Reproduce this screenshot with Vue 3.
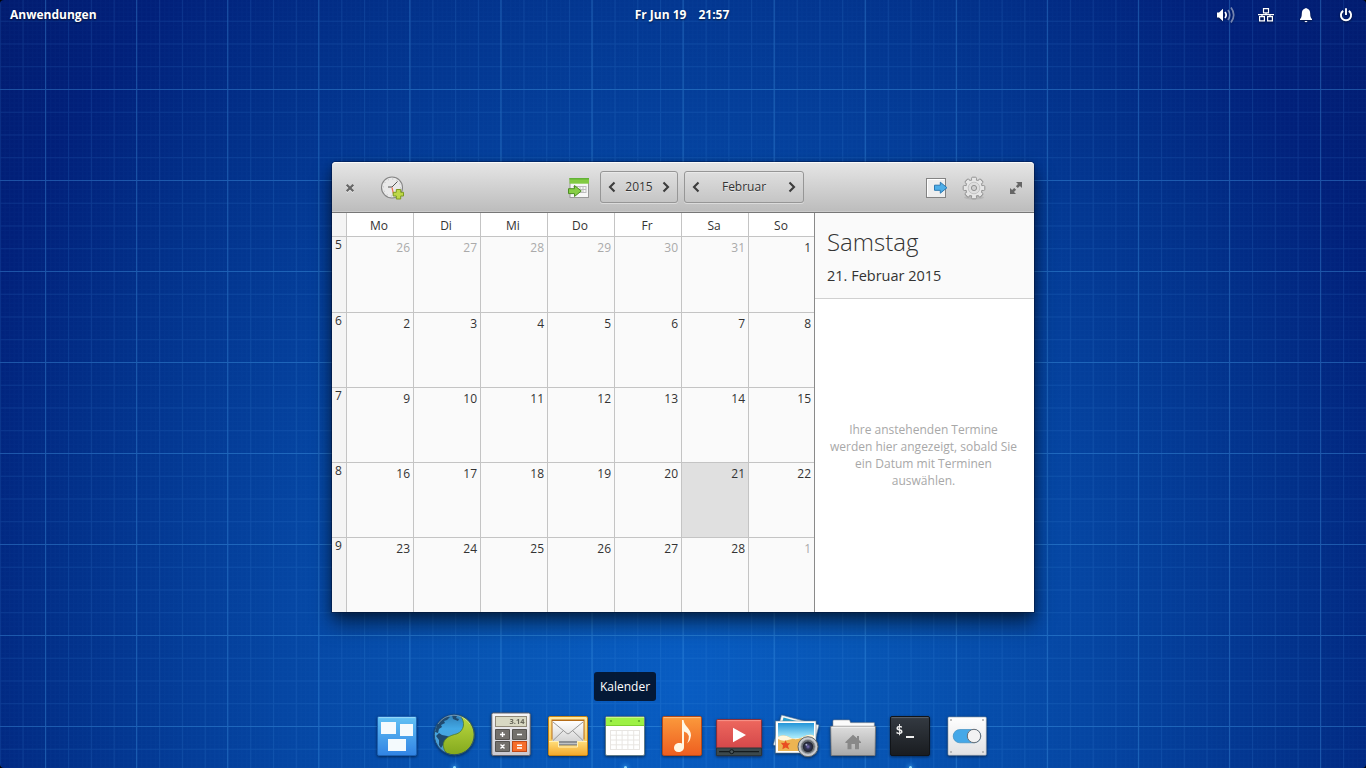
<script setup>
const days = ['Mo', 'Di', 'Mi', 'Do', 'Fr', 'Sa', 'So']
const weeks = [
  { no: 5, days: [26, 27, 28, 29, 30, 31, 1] },
  { no: 6, days: [2, 3, 4, 5, 6, 7, 8] },
  { no: 7, days: [9, 10, 11, 12, 13, 14, 15] },
  { no: 8, days: [16, 17, 18, 19, 20, 21, 22] },
  { no: 9, days: [23, 24, 25, 26, 27, 28, 1] },
]
const isOther = (w, d) => (w === 0 && d < 6) || (w === 4 && d === 6)
const isSelected = (w, d) => w === 3 && d === 5
const teeth = [0, 45, 90, 135, 180, 225, 270, 315]
</script>

<template>
  <div class="desktop">
    <svg class="paper" width="1366" height="768">
      <defs>
        <pattern id="fine" width="4.554" height="4.55" patternUnits="userSpaceOnUse" x="0" y="2.5">
          <path d="M0 .5H4.6M.5 0V4.6" stroke="#3a8af0" stroke-opacity=".035" fill="none" />
        </pattern>
        <pattern id="minor" width="22.768" height="22.75" patternUnits="userSpaceOnUse" x="22.5" y="20.75">
          <path d="M0 .5H22.8M.5 0V22.8" stroke="#4aa0ee" stroke-opacity=".13" fill="none" />
        </pattern>
        <pattern id="major" width="91.07" height="91" patternUnits="userSpaceOnUse" x="45" y="89">
          <path d="M0 .5H91.1M.5 0V91.1" stroke="#4aacf4" stroke-opacity=".25" fill="none" />
        </pattern>
      </defs>
      <rect width="1366" height="768" fill="url(#fine)" />
      <rect width="1366" height="768" fill="url(#minor)" />
      <rect width="1366" height="768" fill="url(#major)" />
      <path d="M0 0H4Q0 0 0 4ZM1366 0H1362Q1366 0 1366 4ZM0 768H4Q0 768 0 764ZM1366 768H1362Q1366 768 1366 764Z" fill="#000" />
    </svg>

    <header class="panel">
      <span class="side">Anwendungen</span>
      <span class="clock"><span>Fr Jun 19</span><span>21:57</span></span>
      <span class="side indicators">
        <svg width="20" height="16" viewBox="0 0 20 16">
          <path d="M1 5.5H3L7 1.7V14.3L3 10.5H1Z" fill="#fff" />
          <path d="M9 5Q11.3 8 9 11" class="wave" />
          <path d="M12 3Q15.5 8 12 13" class="wave dim" />
          <path d="M15 .6Q20.4 8 15 15.5" class="wave dim" />
        </svg>
        <svg width="16" height="16" viewBox="0 0 16 16" fill="none" stroke="#fff" stroke-width="1.2">
          <path d="M5.5 1.6H10.5V5.9H5.5ZM1.6 9.6H6.4V13.9H1.6ZM9.6 9.6H14.4V13.9H9.6ZM0 7.6H16M8 6V7.6M4 7.6V9.5M12 7.6V9.5" />
        </svg>
        <svg width="14" height="16" viewBox="0 0 14 16" fill="#fff">
          <path d="M6 1.5Q7 .5 8 1.5Q11.2 2.5 11.2 6.5Q11.2 10.8 13 12V13H1V12Q2.8 10.8 2.8 6.5Q2.8 2.5 6 1.5ZM5.4 13.9H8.6Q7.8 15.2 7 15.2Q6.2 15.2 5.4 13.9Z" />
        </svg>
        <svg width="14" height="16" viewBox="0 0 14 16" fill="none" stroke="#fff" stroke-width="1.9">
          <path d="M4.2 3.9A5.1 5.1 0 1 0 9.8 3.9M7 1.3V8" />
        </svg>
      </span>
    </header>

    <main class="window">
      <div class="toolbar">
        <svg class="close" width="10" height="10" viewBox="0 0 10 10"><path d="M1.7 1.7L8.3 8.3M8.3 1.7L1.7 8.3" stroke="#fff" stroke-opacity=".5" stroke-width="2.2" transform="translate(0 1)" /><path d="M1.7 1.7L8.3 8.3M8.3 1.7L1.7 8.3" stroke="#666" stroke-width="2.2" /></svg>
        <svg class="new" width="26" height="26" viewBox="0 0 26 26">
          <circle cx="12" cy="12.5" r="10.5" fill="#e9e9e9" stroke="#858585" stroke-width="1.1" />
          <circle cx="12" cy="12.5" r="8.5" fill="none" stroke="#bbb" stroke-width="1" stroke-dasharray="1 3.45" />
          <path d="M8 12H12L17.5 6.5" stroke="#555" fill="none" />
          <path d="M12 12.5L13.5 19" stroke="#f07050" stroke-width="1.2" />
          <path d="M16.3 14.5H20.7V17.3H23.5V21H20.7V24H16.3V21H13.2V17.3H16.3Z" fill="#bed748" stroke="#7c9a20" />
        </svg>
        <svg class="today" width="24" height="24" viewBox="0 0 24 24">
          <rect x="3" y="2.5" width="18.5" height="19" fill="#f7f7f7" stroke="#999" />
          <path d="M2.5 2H22V7.7H2.5Z" fill="#82ca42" />
          <path d="M2.5 2H22V3.5H2.5Z" fill="#62b337" />
          <path d="M6 10.5H19M6 13.5H19M6 16.5H19M7 10V17M10 10V17M13 10V17M16 10V17M19 10V17" stroke="#bdbdbd" fill="none" />
          <path d="M1.5 12.7H7.5V9.5L14.3 15L7.5 20.5V17.6H1.5Z" fill="#87cf45" stroke="#4e8e24" />
        </svg>
        <div class="picker year">
          <svg width="8" height="12" viewBox="0 0 8 12"><path d="M6.5 1.5L2 6L6.5 10.5" /></svg>
          <span>2015</span>
          <svg width="8" height="12" viewBox="0 0 8 12"><path d="M1.5 1.5L6 6L1.5 10.5" /></svg>
        </div>
        <div class="picker month">
          <svg width="8" height="12" viewBox="0 0 8 12"><path d="M6.5 1.5L2 6L6.5 10.5" /></svg>
          <span>Februar</span>
          <svg width="8" height="12" viewBox="0 0 8 12"><path d="M1.5 1.5L6 6L1.5 10.5" /></svg>
        </div>
        <svg class="export" width="24" height="24" viewBox="0 0 24 24">
          <rect x="1.5" y="2.5" width="19" height="19" fill="#eee" stroke="#838383" />
          <path d="M2.5 20.5V3.5H19.5" stroke="#fff" fill="none" />
          <path d="M9.5 9.2H15.3V6.2L22 11.7L15.3 17.2V14.3H9.5Z" fill="#4daee8" stroke="#2b78b2" />
        </svg>
        <svg class="gear" width="24" height="24" viewBox="0 0 24 24">
          <ellipse cx="12" cy="21.5" rx="10" ry="2" fill="#000" opacity=".08" />
          <g fill="#e6e6e6" stroke="#929292">
            <rect v-for="a in teeth" :key="a" x="9.6" y="1.2" width="4.8" height="5" rx="1" :transform="`rotate(${a} 12 12)`" />
            <circle cx="12" cy="12" r="8.4" />
          </g>
          <rect v-for="a in teeth" :key="a" x="10.1" y="2" width="3.8" height="4" fill="#e6e6e6" :transform="`rotate(${a} 12 12)`" />
          <circle cx="12" cy="12" r="5.8" fill="#dedede" stroke="#c4c4c4" />
          <circle cx="12" cy="12" r="2.6" fill="#cfcfcf" stroke="#929292" />
        </svg>
        <svg class="expand" width="14" height="14" viewBox="0 0 14 14"><path d="M7 1H13V7L10.9 5L8.8 7.1L6.9 5.2L9 3.1ZM1 7L3.1 9L5.2 6.9L7.1 8.8L5 10.9L7 13H1Z" fill="#666" /></svg>
      </div>

      <div class="content">
        <div class="calendar">
          <div class="row head">
            <div class="week"></div>
            <div v-for="d in days" :key="d" class="cell">{{ d }}</div>
          </div>
          <div v-for="(w, wi) in weeks" :key="w.no" class="row">
            <div class="week">{{ w.no }}</div>
            <div v-for="(n, di) in w.days" :key="di" class="cell" :class="{ other: isOther(wi, di), selected: isSelected(wi, di) }">{{ n }}</div>
          </div>
        </div>
        <aside class="agenda">
          <div class="date">
            <h1>Samstag</h1>
            <p>21. Februar 2015</p>
          </div>
          <p class="hint">Ihre anstehenden Termine<br />werden hier angezeigt, sobald Sie<br />ein Datum mit Terminen<br />auswählen.</p>
        </aside>
      </div>
    </main>

    <div class="tooltip">Kalender</div>

    <nav class="dock">
      <div class="app">
        <svg viewBox="0 0 48 48">
          <defs><linearGradient id="gw" x2="0" y2="1"><stop stop-color="#62c2f4" /><stop offset="1" stop-color="#3183e4" /></linearGradient></defs>
          <rect x="4.5" y="4.5" width="39" height="39" rx="1.5" fill="url(#gw)" stroke="#1d62b4" />
          <path d="M5.5 5.6H42.5" stroke="#98dafa" />
          <path d="M8 10H23V22H8ZM27 12H40V24H27ZM15 27H33V39H15Z" fill="#f4fafd" />
        </svg>
      </div>
      <div class="app running">
        <svg viewBox="0 0 48 48">
          <defs>
            <linearGradient id="gb" x2="0" y2="1"><stop stop-color="#2f7fb8" /><stop offset=".35" stop-color="#43a9e6" /><stop offset="1" stop-color="#4e96cc" /></linearGradient>
            <linearGradient id="gg" x2="0" y2="1"><stop stop-color="#bddb40" /><stop offset="1" stop-color="#83a81e" /></linearGradient>
          </defs>
          <circle cx="24.3" cy="22.8" r="20" fill="url(#gb)" />
          <path d="M7 13Q10 6 17 4L20 5L17 8L14 9L15 11L11 13L12 15L9 17L8 21L5 20ZM22 3L27 4L26 6L29 7L28 9L23 7ZM9 21L12 23L17 24L20 25L15 28L13 33L11 36L9 33L9 28L6 24Z" fill="#1f4a70" />
          <path d="M30 3.6C36 10 34 19 27 21.8C20 23.6 13 26 13.2 34Q13.7 39 17.3 41.5A20 20 0 1 0 30 3.6Z" fill="url(#gg)" stroke="#4e782b" stroke-width=".8" />
          <circle cx="24.3" cy="22.8" r="20" fill="none" stroke="#244e72" />
          <path d="M8 12A19 19 0 0 1 40 12" fill="none" stroke="#fff" stroke-opacity=".35" />
        </svg>
      </div>
      <div class="app">
        <svg viewBox="0 0 48 48">
          <defs><linearGradient id="gc" x2="0" y2="1"><stop stop-color="#f6f6f8" /><stop offset="1" stop-color="#c9c8cf" /></linearGradient></defs>
          <rect x="4.8" y="1" width="38.4" height="42.5" rx="1.5" fill="url(#gc)" stroke="#66656c" />
          <rect x="8.5" y="4.5" width="31" height="10" fill="#d8d8c3" stroke="#8f8878" />
          <text x="37.5" y="12.4" text-anchor="end" class="lcd">3.14</text>
          <path d="M8.5 17.5H22.5V27.5H8.5ZM25.5 17.5H39.5V27.5H25.5ZM8.5 29.5H22.5V39.5H8.5Z" fill="#73706c" stroke="#55524f" />
          <rect x="25.5" y="29.5" width="14" height="10" fill="#f66d2b" stroke="#c04716" />
          <path d="M13 22.5H18M15.5 20V25M30 22.5H35M13.5 32.5L17.5 36.5M17.5 32.5L13.5 36.5M30 33.3H35M30 36H35" stroke="#fff" stroke-width="1.4" />
        </svg>
      </div>
      <div class="app">
        <svg viewBox="0 0 48 48">
          <defs>
            <linearGradient id="gm" x2="0" y2="1"><stop stop-color="#ffe9a0" /><stop offset="1" stop-color="#f8bd3a" /></linearGradient>
            <linearGradient id="ge" x2="0" y2="1"><stop stop-color="#fff" /><stop offset="1" stop-color="#d4d4d4" /></linearGradient>
            <linearGradient id="gy" x2="0" y2="1"><stop stop-color="#ffdf7c" /><stop offset="1" stop-color="#f3a92c" /></linearGradient>
          </defs>
          <rect x="4.5" y="4.5" width="39" height="39" rx="1.5" fill="url(#gm)" stroke="#c88412" />
          <rect x="7.5" y="7.5" width="33" height="20" fill="#b56c17" />
          <rect x="8.5" y="9" width="31" height="20" fill="url(#ge)" />
          <path d="M9 10L23 21.5Q24 22.2 25 21.5L39 10M9 28.5L19.5 18.5M39 28.5L28.5 18.5" stroke="#999" fill="none" />
          <path d="M5 29H15V34.5H33V29H43V43H5Z" fill="url(#gy)" />
          <path d="M5 29.5H14.5V35H33.5V29.5H43" stroke="#fff0b8" fill="none" />
          <path d="M15 29H33V33.5H15Z" fill="#8d9094" /><path d="M15 31.5H33" stroke="#bfc2c4" />
        </svg>
      </div>
      <div class="app running">
        <svg viewBox="0 0 48 48">
          <rect x="4.5" y="4.5" width="39" height="39" rx="1.5" fill="#fff" stroke="#607a86" />
          <path d="M5 5H43V14H5Z" fill="#9df145" /><path d="M5 5.5H43" stroke="#c5fa88" /><path d="M5 13.5H43" stroke="#7dd02d" />
          <circle cx="10" cy="9" r="1.1" fill="#5eaa28" /><circle cx="38" cy="9" r="1.1" fill="#5eaa28" />
          <path d="M9.5 18.5H38.5M9.5 23.2H38.5M9.5 28H38.5M9.5 32.8H38.5M9.5 37.5H38.5M9.5 18V38M15.3 18V38M21.1 18V38M26.9 18V38M32.7 18V38M38.5 18V38" stroke="#e8e5e2" fill="none" />
        </svg>
      </div>
      <div class="app">
        <svg viewBox="0 0 48 48">
          <defs><linearGradient id="gn" x2="0" y2="1"><stop stop-color="#fb9a3c" /><stop offset="1" stop-color="#ee5e20" /></linearGradient></defs>
          <rect x="4.5" y="4.5" width="39" height="39" rx="1.5" fill="url(#gn)" stroke="#b64a18" />
          <path d="M5.5 5.6H42.5" stroke="#ffc07d" />
          <path d="M24 8H25.5C26.3 14.5 33 16.5 33 23.5Q33 27.5 29.3 31.5Q33.5 21.5 26 19.5V35C26 38.5 23.5 40 20.5 40C17.5 40 16 38.3 16 36C16 32 20 30 24 31.5Z" fill="#fff7e4" />
        </svg>
      </div>
      <div class="app">
        <svg viewBox="0 0 48 48">
          <defs><linearGradient id="gv" x2="0" y2="1"><stop stop-color="#ee685e" /><stop offset="1" stop-color="#cd3f45" /></linearGradient></defs>
          <rect x="1.6" y="7.6" width="45" height="36" rx="1" fill="url(#gv)" stroke="#892d36" />
          <path d="M2.6 8.6H45.6" stroke="#f99389" />
          <path d="M18 15.7L31 23L18 30.3Z" fill="#fff" />
          <path d="M1.5 36H46.5V43.5H1.5Z" fill="#3d494d" stroke="#2a3438" />
          <path d="M4 39.7H44" stroke="#151c1f" stroke-width="1.2" /><circle cx="16.7" cy="39.7" r="2" fill="#4c585b" stroke="#12191c" />
        </svg>
      </div>
      <div class="app">
        <svg viewBox="0 0 48 48">
          <defs>
            <linearGradient id="gs" x2="0" y2="1"><stop stop-color="#2395d8" /><stop offset=".5" stop-color="#a5e8fa" /></linearGradient>
            <radialGradient id="gl"><stop stop-color="#7d70bb" /><stop offset=".45" stop-color="#333657" /><stop offset="1" stop-color="#20232b" /></radialGradient>
          </defs>
          <path d="M9.5 3L47 13L40 41L1.3 33Z" fill="#f7f7f7" stroke="#5b7c98" stroke-width=".6" />
          <path d="M11.5 5.5L32 11H10Z" fill="#239dcb" />
          <rect x="3.5" y="9" width="40.5" height="32" fill="#fff" stroke="#69818e" stroke-width=".6" />
          <path d="M6 11H42V39H6Z" fill="url(#gs)" />
          <path d="M6 25Q12 22 18 25.5T31 25T42 24V39H6Z" fill="#edb452" />
          <path d="M6 25Q12 22 18 25.5T31 25T42 24V27Q35 28 30 26.5T18 27.5T6 27Z" fill="#fff6dc" />
          <path d="M13.7 28.2L14.9 31.3L18.3 31.2L15.9 33.8L17.2 37.2L13.7 35.5L10.4 37.2L11 33.4L8.8 30.7L12.2 31Z" fill="#e94f22" />
          <circle cx="36" cy="34.7" r="10" fill="#c9cbce" stroke="#5e6468" />
          <circle cx="36" cy="34.7" r="7.2" fill="#696e74" stroke="#a4a7ab" stroke-width=".8" />
          <circle cx="36" cy="34.7" r="5.2" fill="url(#gl)" />
          <circle cx="34.4" cy="32.8" r="1" fill="#aab0d0" />
        </svg>
      </div>
      <div class="app">
        <svg viewBox="0 0 48 48">
          <defs><linearGradient id="gf" x2="0" y2="1"><stop stop-color="#dedede" /><stop offset="1" stop-color="#a9a9a9" /></linearGradient></defs>
          <path d="M4 15V9Q4 8 5 8H20.5L21.5 10.7H45.3V16H4Z" fill="#fbfbfb" stroke="#93999e" stroke-width=".6" />
          <path d="M1.7 14.3H46.5L46 43.5H2.2Z" fill="url(#gf)" stroke="#777" stroke-width=".8" />
          <path d="M2.7 15.2H45.6" stroke="#f5f5f5" />
          <path d="M24 22.7L28 26.3V24H30V28L32 30V31H30V37.3H26V32H22.5V37.3H18.5V31H16.4V30Z" fill="#888" />
        </svg>
      </div>
      <div class="app running">
        <svg viewBox="0 0 48 48">
          <defs><linearGradient id="gt" x2="0" y2="1"><stop stop-color="#343a42" /><stop offset="1" stop-color="#191c20" /></linearGradient></defs>
          <rect x="4.5" y="4.5" width="39" height="39" rx="1.5" fill="url(#gt)" stroke="#111418" />
          <path d="M5.5 5.6H42.5" stroke="#5b6269" />
          <text x="9.6" y="22.3" class="prompt">$</text>
          <path d="M20 25H28" stroke="#f0f0f0" stroke-width="2" />
        </svg>
      </div>
      <div class="app">
        <svg viewBox="0 0 48 48">
          <defs><linearGradient id="gk" x2="0" y2="1"><stop stop-color="#fff" /><stop offset="1" stop-color="#e1e1e3" /></linearGradient></defs>
          <rect x="5" y="5" width="38.3" height="38.3" rx="1" fill="url(#gk)" stroke="#8f9aa5" stroke-width=".6" />
          <g fill="#aaa"><circle cx="8" cy="8" r="1" /><circle cx="40" cy="8" r="1" /><circle cx="8" cy="40" r="1" /><circle cx="40" cy="40" r="1" /></g>
          <rect x="10.2" y="17.5" width="27.6" height="13.3" rx="6.6" fill="#45a8e8" stroke="#3286bc" stroke-width=".6" />
          <circle cx="31" cy="24" r="6.7" fill="#f2f2f3" stroke="#686f77" />
        </svg>
      </div>
    </nav>
  </div>
</template>

<style>
html, body { margin: 0; overflow: hidden; }
</style>

<style scoped>
* { box-sizing: border-box; }
.desktop {
  position: relative; width: 1366px; height: 768px; overflow: hidden;
  display: flex; flex-direction: column; align-items: center;
  font: 12px/17px "Open Sans", "Noto Sans", sans-serif; color: #333;
  background: radial-gradient(ellipse 830px 1020px at 683px 690px, #085cc2 0%, #0755b4 22%, #0546a3 48%, #023089 76%, #01207a 92%, #021a6c 112%);
}
.paper { position: absolute; inset: 0; }
.panel {
  position: relative; width: 100%; height: 30px; padding: 0 12px 0 10px; flex: none;
  display: flex; align-items: center; color: #fff; font-weight: 700; text-shadow: 0 1px 2px rgba(0, 0, 0, .6);
}
.side { flex: 1; }
.side:first-child, .clock { padding-bottom: 2px; }
.clock { display: flex; gap: 12px; }
.indicators { display: flex; justify-content: flex-end; align-items: center; }
.indicators svg { filter: drop-shadow(0 1px 1px rgba(0, 0, 0, .5)); margin-left: 22px; }
.indicators svg:nth-child(3) { margin-left: 25px; }
.indicators svg:nth-child(4) { margin-left: 26px; margin-right: 1px; }
.wave { fill: none; stroke: #fff; stroke-width: 1.7; }
.dim { opacity: .45; }

.window {
  position: relative; width: 702px; height: 450px; margin-top: 132px; flex: none;
  display: flex; flex-direction: column; border-radius: 4px 4px 0 0;
  box-shadow: 0 0 0 1px rgba(0, 10, 40, .35), 0 12px 20px rgba(0, 0, 0, .5), 0 3px 10px rgba(0, 0, 0, .3);
}
.toolbar {
  height: 51px; display: flex; align-items: center; padding: 2px 11px 0 13px; flex: none;
  background: linear-gradient(#e6e6e6, #bcbcbc); border-bottom: 1px solid #777;
  border-radius: 4px 4px 0 0; box-shadow: inset 0 1px #fafafa, inset 0 -1px #cbcbcb;
}
.new { margin-left: 25px; }
.today { margin-left: 161px; }
.picker {
  display: flex; align-items: center; justify-content: space-between; height: 32px; padding: 0 7px;
  border: 1px solid #969696; border-radius: 3px; box-shadow: inset 0 1px rgba(255, 255, 255, .35), 0 1px rgba(255, 255, 255, .4);
  background: linear-gradient(#dedede, #c5c5c5); text-shadow: 0 1px rgba(255, 255, 255, .5); margin-top: -3px;
}
.picker path { fill: none; stroke: #3c3c3c; stroke-width: 2.1; }
.year { width: 78px; margin-left: 9px; }
.month { width: 120px; margin-left: 6px; }
.export { margin-left: 121px; }
.gear { margin-left: 13px; }
.expand { margin-left: auto; }

.content { flex: 1; display: flex; min-height: 0; }
.calendar {
  width: 483px; display: grid; grid-template-rows: 24px 76px repeat(3, 75px) 74px;
  border-right: 1px solid #8a8a8a; background: #fafafa;
}
.row { display: grid; grid-template-columns: 15px repeat(6, 67px) 65px; border-bottom: 1px solid #c4c4c4; }
.row:last-child { border-bottom: 0; }
.week { border-right: 1px solid #c4c4c4; background: #f4f4f4; text-align: center; padding-right: 1px; line-height: 15px; }
.cell { border-right: 1px solid #c4c4c4; text-align: right; padding: 2px 3px 0 0; }
.cell:last-child { border-right: 0; padding-right: 3px; }
.head .cell { text-align: center; padding: 4px 2px 0 0; background: #fff; }
.head .cell:last-child { padding-right: 1px; }
.other { color: #aaa; }
.selected { background: #e0e0e0; }

.agenda { flex: 1; background: #fff; display: flex; flex-direction: column; }
.date { height: 86px; background: #fafafa; border-bottom: 1px solid #d0d0d0; padding: 12px 12px 0; flex: none; }
h1 { margin: 0; font-size: 24px; line-height: 34px; font-weight: 300; }
.date p { margin: 8px 0 0; font-size: 14.5px; line-height: 18px; }
.hint { margin: auto 0; padding: 0 2px 2px 0; text-align: center; color: #a8a8a8; }

.tooltip {
  position: absolute; left: 594px; top: 672px; width: 62px; height: 29px; border-radius: 3px;
  background: rgba(4, 20, 44, .93); color: #fff; text-align: center; line-height: 29px;
}
.dock { position: relative; margin-top: 100px; display: flex; gap: 9px; height: 56px; left: -1px; }
.app { position: relative; width: 48px; }
.app svg { display: block; width: 48px; height: 48px; filter: drop-shadow(0 1px 1.5px rgba(0, 0, 0, .5)); }
.running::after {
  content: ""; position: absolute; left: 23px; top: 53.5px; width: 3px; height: 3px; border-radius: 50%;
  background: #8fdcff; box-shadow: 0 0 4px 1.5px rgba(70, 175, 255, .55);
}
.lcd { font: 700 7.5px "Open Sans", sans-serif; fill: #67665a; }
.prompt { font: 700 13px "DejaVu Sans Mono", monospace; fill: #f0f0f0; }
</style>
